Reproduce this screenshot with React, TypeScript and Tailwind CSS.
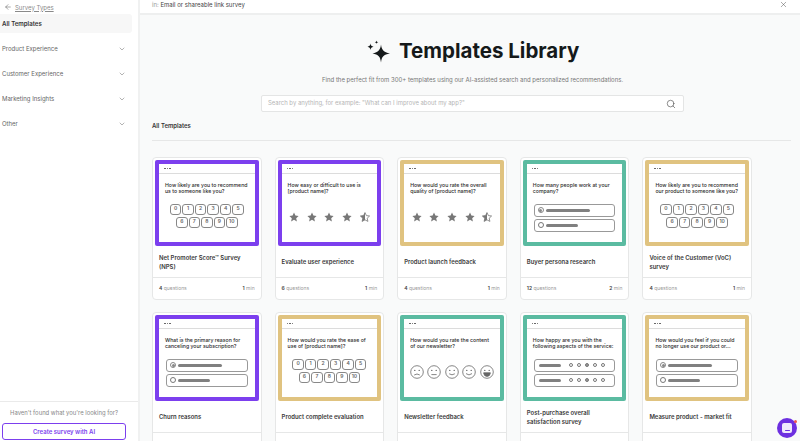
import { ArrowLeft, ChevronDown, Search, X } from 'lucide-react';

type Answer = 'nps' | 'stars' | 'radio' | 'smileys' | 'matrix';

type Template = {
  title: string;
  question: string;
  answer: Answer;
  frame: string;
  count: number;
  mins: number;
};

const PURPLE = 'bg-[#7c3fee]';
const GOLD = 'bg-[#e0c380]';
const TEAL = 'bg-[#5bbba1]';

const templates: Template[] = [
  { title: 'Net Promoter Score™ Survey (NPS)', question: 'How likely are you to recommend us to someone like you?', answer: 'nps', frame: PURPLE, count: 4, mins: 1 },
  { title: 'Evaluate user experience', question: 'How easy or difficult to use is [product name]?', answer: 'stars', frame: PURPLE, count: 6, mins: 1 },
  { title: 'Product launch feedback', question: 'How would you rate the overall quality of [product name]?', answer: 'stars', frame: GOLD, count: 4, mins: 1 },
  { title: 'Buyer persona research', question: 'How many people work at your company?', answer: 'radio', frame: TEAL, count: 12, mins: 2 },
  { title: 'Voice of the Customer (VoC) survey', question: 'How likely are you to recommend our product to someone like you?', answer: 'nps', frame: GOLD, count: 4, mins: 1 },
  { title: 'Churn reasons', question: 'What is the primary reason for canceling your subscription?', answer: 'radio', frame: PURPLE, count: 5, mins: 1 },
  { title: 'Product complete evaluation', question: 'How would you rate the ease of use of [product name]?', answer: 'nps', frame: GOLD, count: 8, mins: 2 },
  { title: 'Newsletter feedback', question: 'How would you rate the content of our newsletter?', answer: 'smileys', frame: TEAL, count: 4, mins: 1 },
  { title: 'Post-purchase overall satisfaction survey', question: 'How happy are you with the following aspects of the service:', answer: 'matrix', frame: TEAL, count: 6, mins: 1 },
  { title: 'Measure product - market fit', question: 'How would you feel if you could no longer use our product or...', answer: 'radio', frame: GOLD, count: 4, mins: 1 },
];

const categories = ['Product Experience', 'Customer Experience', 'Marketing Insights', 'Other'];

const STAR = 'M5 .6l1.4 3 3.2.4-2.4 2.2.7 3.2L5 7.8 2.1 9.4l.7-3.2L.4 4l3.2-.4z';

function Star({ half }: { half?: boolean }) {
  return (
    <svg width="10" height="10" viewBox="0 0 10 10">
      {half ? (
        <>
          <path d={STAR} fill="none" stroke="#777" strokeWidth="0.8" />
          <path d="M5 .6v7.2L2.1 9.4l.7-3.2L.4 4l3.2-.4z" fill="#777" />
        </>
      ) : (
        <path d={STAR} fill="#777" />
      )}
    </svg>
  );
}

function Nps() {
  const rows = [[0, 1, 2, 3, 4, 5], [6, 7, 8, 9, 10]];
  return (
    <div className="mt-[9px] flex flex-col items-center gap-[2px]">
      {rows.map((row) => (
        <div key={row[0]} className="flex gap-[1px]">
          {row.map((n) => (
            <div key={n} className="flex h-[11px] w-[11.5px] items-center justify-center rounded-[3px] border border-[#888] text-[5px] font-semibold text-[#666]">
              {n}
            </div>
          ))}
        </div>
      ))}
    </div>
  );
}

function Stars() {
  return (
    <div className="mt-[17px] flex justify-center gap-[7.6px]">
      <Star />
      <Star />
      <Star />
      <Star />
      <Star half />
    </div>
  );
}

function Radios() {
  return (
    <div className="mx-[7px] mt-[9px] flex flex-col gap-[2px]">
      <div className="flex h-[13px] items-center gap-[2px] rounded-[3px] border border-[#999] pl-[3px]">
        <div className="flex h-[6px] w-[6px] items-center justify-center rounded-full border-[0.7px] border-[#888]">
          <div className="h-[3px] w-[3px] rounded-full bg-[#888]" />
        </div>
        <div className="h-[3px] w-[44px] rounded-full bg-[#808080]" />
      </div>
      <div className="flex h-[13px] items-center gap-[2px] rounded-[3px] border border-[#999] pl-[3px]">
        <div className="h-[6px] w-[6px] rounded-full border-[0.7px] border-[#777]" />
        <div className="h-[3px] w-[32px] rounded-full bg-[#808080]" />
      </div>
    </div>
  );
}

function MatrixRow() {
  return (
    <div className="flex h-[13px] items-center justify-between rounded-[3px] border border-[#999] pl-[4px] pr-[9px]">
      <div className="h-[3px] w-[22px] rounded-full bg-[#808080]" />
      <div className="flex gap-[4.2px]">
        {[0, 1, 2, 3, 4].map((i) => (
          <div key={i} className={`h-[4px] w-[4px] rounded-full border-[0.7px] border-[#777] ${i === 2 ? 'bg-[#999]' : ''}`} />
        ))}
      </div>
    </div>
  );
}

function Matrix() {
  return (
    <div className="mx-[7px] mt-[9px] flex flex-col gap-[2px]">
      <MatrixRow />
      <MatrixRow />
    </div>
  );
}

function Smiley({ mood }: { mood: number }) {
  const mouths = ['M4.2 10q2.8-2 5.6 0', 'M4.4 9.6h5.2', 'M4.2 8.8q2.8 2 5.6 0', 'M4 8.6q3 2.6 6 0'];
  return (
    <svg width="14" height="14" viewBox="0 0 14 14" fill="none" stroke="#666" strokeWidth="0.8">
      <circle cx="7" cy="7" r="6.3" />
      <circle cx="4.8" cy="5.4" r="0.7" fill="#666" stroke="none" />
      <circle cx="9.2" cy="5.4" r="0.7" fill="#666" stroke="none" />
      {mood < 4 ? <path d={mouths[mood]} /> : <path d="M3.6 7.8h6.8q-.4 3.6-3.4 3.6T3.6 7.8z" fill="#666" />}
    </svg>
  );
}

function Smileys() {
  return (
    <div className="mt-[15px] flex justify-center gap-[3.5px]">
      {[0, 1, 2, 3, 4].map((m) => (
        <Smiley key={m} mood={m} />
      ))}
    </div>
  );
}

function AnswerPreview({ kind }: { kind: Answer }) {
  if (kind === 'nps') return <Nps />;
  if (kind === 'stars') return <Stars />;
  if (kind === 'radio') return <Radios />;
  if (kind === 'matrix') return <Matrix />;
  return <Smileys />;
}

function TemplateCard({ item }: { item: Template }) {
  return (
    <div className="h-[143px] rounded-[4px] border border-[#e6e7e7] bg-white">
      <div className={`mx-[2px] mt-[2px] h-[86px] rounded-[2px] p-[4px] ${item.frame}`}>
        <div className="h-full bg-white">
          <div className="flex h-[9.5px] items-center gap-[1px] border-b border-[#dcdcdc] pl-[5px]">
            <span className="h-[1.5px] w-[1.5px] rounded-full bg-[#555]" />
            <span className="h-[1.5px] w-[1.5px] rounded-full bg-[#555]" />
            <span className="h-[1.5px] w-[1.5px] rounded-full bg-[#555]" />
          </div>
          <p className="mt-[8px] h-[13px] px-[6px] text-[5.2px] font-medium leading-[6.4px] text-[#2a2a2a]">{item.question}</p>
          <AnswerPreview kind={item.answer} />
        </div>
      </div>
      <div className="flex h-[32px] items-center border-b border-[#e6e7e7] px-[6px] pt-[2px] text-[5.95px] font-semibold leading-[8.6px] text-[#3a3a3a]">
        {item.title}
      </div>
      <div className="flex h-[21px] items-center justify-between px-[6px] text-[5px] text-[#999]">
        <span><b className="font-semibold text-[#444]">{item.count}</b> questions</span>
        <span><b className="font-semibold text-[#444]">{item.mins}</b> min</span>
      </div>
    </div>
  );
}

function Sidebar() {
  return (
    <aside className="flex h-full w-[140px] shrink-0 flex-col border-r-2 border-[#f0f1f1] bg-white">
      <div className="flex h-[14px] items-center gap-[3px] pl-[4px] text-[6px] text-[#8a8a8a]">
        <ArrowLeft size={8} strokeWidth={1.5} className="text-[#555]" />
        <span className="underline">Survey Types</span>
      </div>
      <div className="mr-[6px] flex h-[19px] items-center rounded-r-[3px] bg-[#f7f7f7] pl-[2px] text-[6.1px] font-semibold text-[#333]">
        All Templates
      </div>
      <nav className="mt-[3px] flex flex-col">
        {categories.map((c) => (
          <div key={c} className="flex h-[25px] items-center justify-between pl-[2px] pr-[12px] text-[6px] text-[#666]">
            {c}
            <ChevronDown size={8} strokeWidth={1.5} className="text-[#666]" />
          </div>
        ))}
      </nav>
      <div className="mt-auto flex flex-col items-center border-t border-[#eaeaea] pt-[7px]">
        <p className="pr-[10px] text-[5.9px] text-[#888]">Haven't found what you're looking for?</p>
        <button className="mb-[1px] mr-[10px] mt-[5px] h-[17px] w-[124px] rounded-[3px] border border-[#7c3fee] text-[6px] font-semibold text-[#7c3fee]">
          Create survey with AI
        </button>
      </div>
    </aside>
  );
}

export default function App() {
  return (
    <div className="relative flex h-[441px] w-[800px] overflow-hidden bg-white font-['Inter',sans-serif]">
      <Sidebar />
      <main className="flex h-full min-w-0 flex-1 flex-col overflow-hidden bg-[#f9fafa]">
        <div className="flex h-[15px] shrink-0 items-center justify-between border-b-2 border-[#eeefef] bg-white pb-[4px] pl-[12px] pr-[12px] text-[6px] text-[#444]">
          <span><span className="text-[#999]">in:</span> Email or shareable link survey</span>
          <X size={9} strokeWidth={1.2} className="text-[#444]" />
        </div>
        <div className="ml-[226px] mt-[22px] flex items-center gap-[8px]">
          <svg width="25" height="24" viewBox="0 0 25 24" fill="#15191a">
            <path d="M15 5.5c.7 5.500 2.500 7.500 9 9-6.500 1-8.300 3-9 9-.7-6-2.500-8-8.500-9 6-1.500 7.800-3.500 8.500-9z" />
            <path d="M4.500 4.500c.3 2 1 2.800 3 3.200-2 .4-2.700 1.200-3 3.300-.3-2.100-1-2.900-3-3.300 2-.4 2.700-1.200 3-3.200z" />
            <path d="M10.500 1.500c.2 1.200.6 1.600 1.800 1.800-1.200.2-1.600.6-1.800 1.800-.2-1.200-.6-1.600-1.800-1.800 1.200-.2 1.600-.6 1.800-1.800z" />
          </svg>
          <h1 className="text-[20.5px] font-bold leading-[28px] text-[#15191a]">Templates Library</h1>
        </div>
        <p className="mt-[10px] pl-[182px] text-[6px] leading-[10px] text-[#777]">
          Find the perfect fit from 300+ templates using our AI-assisted search and personalized recommendations.
        </p>
        <div className="ml-[121px] mt-[10px] flex h-[17px] w-[423px] shrink-0 items-center justify-between rounded-[2px] border border-[#e4e5e5] bg-white pl-[6px] pr-[7px] text-[5.95px] text-[#b5b5b5]">
          <span>Search by anything, for example: "What can I improve about my app?"</span>
          <Search size={10} strokeWidth={1.6} className="text-[#555]" />
        </div>
        <div className="ml-[12px] mr-[9px] mt-[9px] flex h-[20px] shrink-0 items-center border-b border-[#e6e7e7] pb-[8px] text-[5.95px] font-semibold text-[#333]">
          All Templates
        </div>
        <div className="ml-[12px] mt-[16px] grid w-[600px] shrink-0 grid-cols-5 gap-x-[13px] gap-y-[12px]">
          {templates.map((t) => (
            <TemplateCard key={t.title} item={t} />
          ))}
        </div>
      </main>
      <div className="absolute left-[777px] top-[418px] flex h-[20px] w-[20px] items-center justify-center rounded-full bg-[#6d2fe0]">
        <div className="flex h-[10px] w-[10px] items-end justify-center rounded-[2px] bg-[#efe8fc] pb-[2px]">
          <div className="h-[1px] w-[5px] rounded-full bg-[#6d2fe0]" />
        </div>
        <span className="absolute right-[0.5px] top-[1.5px] h-[3px] w-[3px] rounded-full bg-[#ef5350]" />
      </div>
    </div>
  );
}
